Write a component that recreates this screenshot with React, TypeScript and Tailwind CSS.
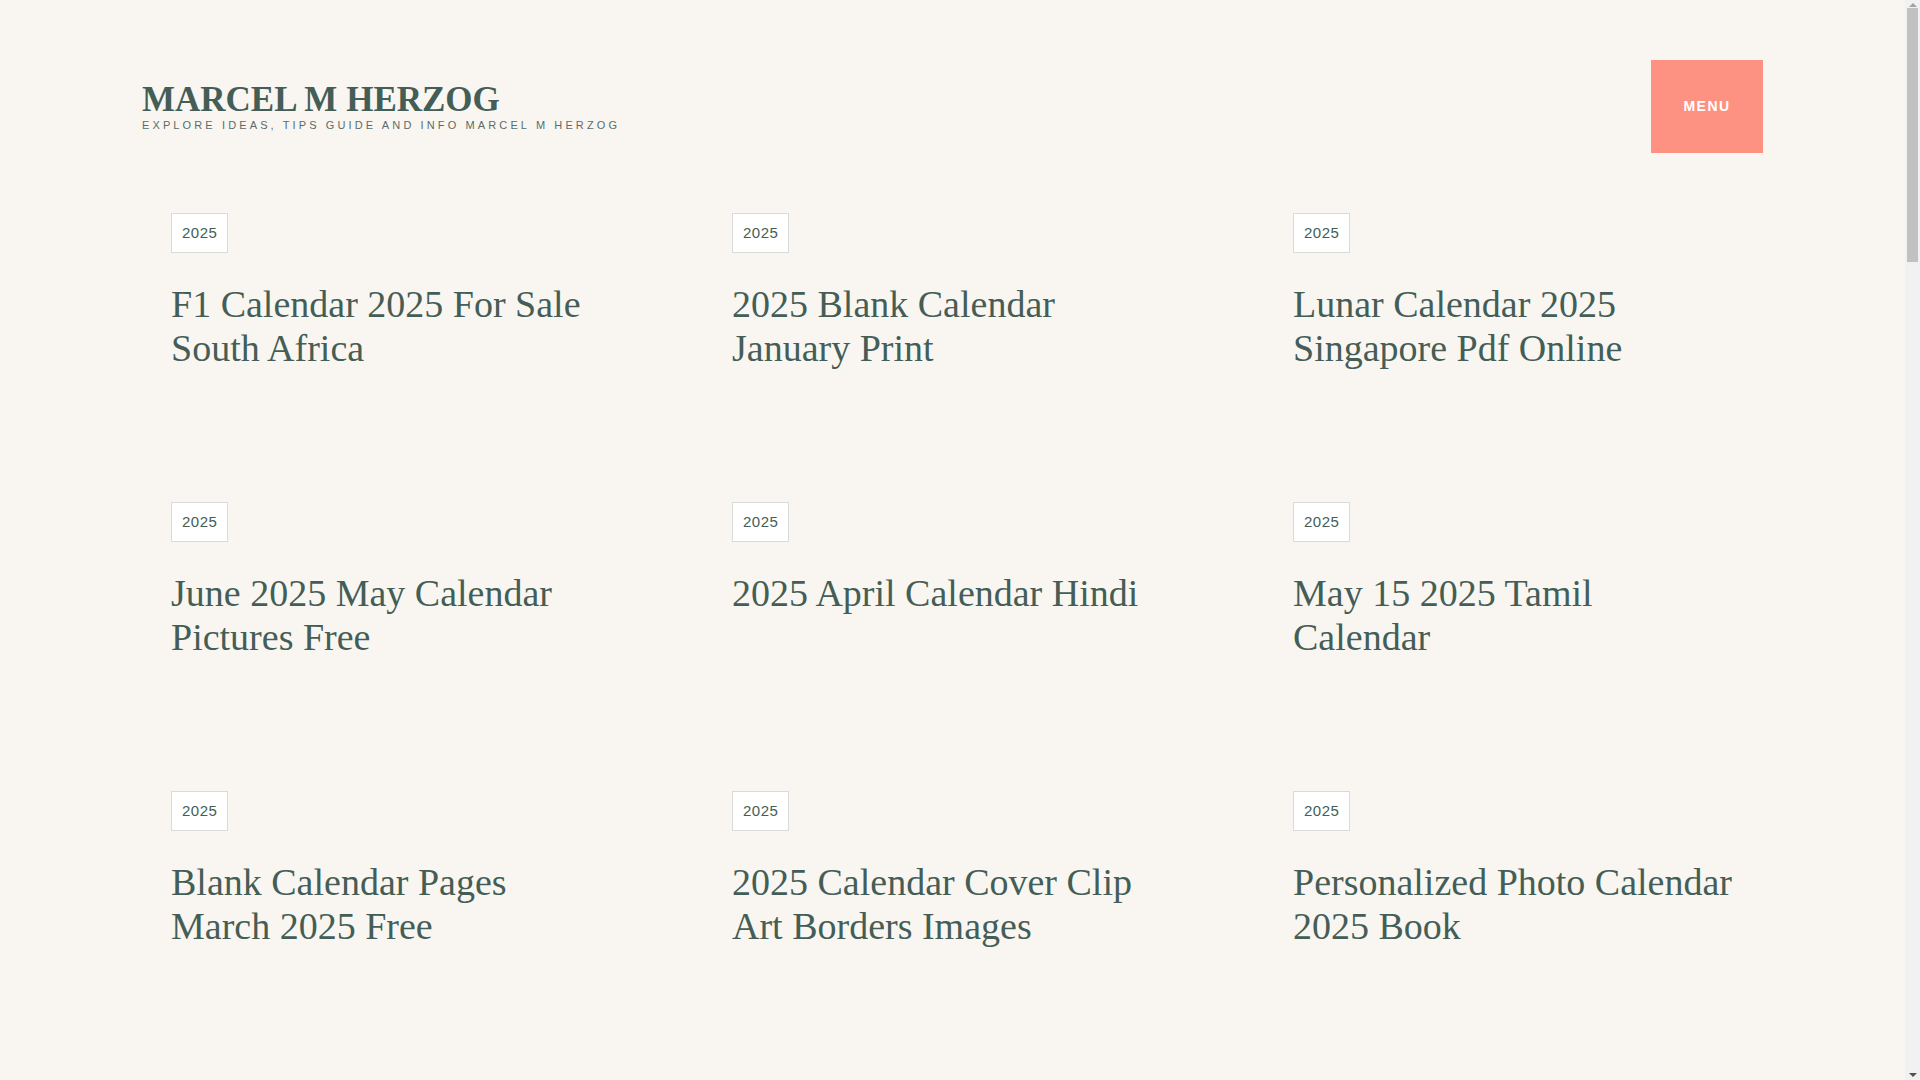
import React from 'react';

const posts: string[] = [
  'F1 Calendar 2025 For Sale South Africa',
  '2025 Blank Calendar January Print',
  'Lunar Calendar 2025 Singapore Pdf Online',
  'June 2025 May Calendar Pictures Free',
  '2025 April Calendar Hindi',
  'May 15 2025 Tamil Calendar',
  'Blank Calendar Pages March 2025 Free',
  '2025 Calendar Cover Clip Art Borders Images',
  'Personalized Photo Calendar 2025 Book',
];

function PostCard({ title }: { title: string }) {
  return (
    <article className="flex flex-col items-start">
      <a
        href="#"
        className="flex h-[40px] items-center border border-[#d9dbd8] bg-white px-[10px] font-['Liberation_Sans',Arial,sans-serif] text-[15px] tracking-[0.5px] text-[#445e57]"
      >
        2025
      </a>
      <h2 className="mt-[29px] font-['Liberation_Serif','Times_New_Roman',serif] text-[38px] font-normal leading-[44px] text-[#445e57]">
        <a href="#">{title}</a>
      </h2>
    </article>
  );
}

// browser-style scrollbar strip on the right edge
function ScrollBar() {
  return (
    <div className="flex h-full w-[15px] shrink-0 flex-col items-center bg-[#f1f1f1]">
      <div className="mt-[3px] h-0 w-0 border-x-[4px] border-b-[4px] border-x-transparent border-b-[#a3a3a3]" />
      <div className="mt-[1px] h-[254px] w-[11px] bg-[#c1c1c1]" />
      <div className="flex-1" />
      <div className="mb-[3px] h-0 w-0 border-x-[4px] border-t-[4px] border-x-transparent border-t-[#505050]" />
    </div>
  );
}

export default function App() {
  return (
    <div className="flex h-screen overflow-hidden bg-[#f9f6f1]">
      <div className="flex-1">
        {/* Header */}
        <header className="flex items-start justify-between px-[142px] pt-[60px]">
          <div className="mt-[22px] flex flex-col">
            <a
              href="#"
              className="font-['Liberation_Serif','Times_New_Roman',serif] text-[35px] font-bold leading-[36px] text-[#445e57]"
            >
              MARCEL M HERZOG
            </a>
            <p className="mt-[1px] font-['Liberation_Sans',Arial,sans-serif] text-[11px] leading-[12px] tracking-[3.12px] text-[#5b6c67]">
              EXPLORE IDEAS, TIPS GUIDE AND INFO MARCEL M HERZOG
            </p>
          </div>
          <button className="flex h-[93px] w-[112px] items-center justify-center bg-[#fe9282] font-['Liberation_Sans',Arial,sans-serif] text-[14px] font-bold tracking-[1.5px] text-white">
            MENU
          </button>
        </header>

        {/* Posts */}
        <main className="mx-auto mt-[60px] grid w-[1563px] grid-cols-[441px_441px_441px] gap-x-[120px] gap-y-[132px]">
          {posts.map((t, i) => (
            <PostCard key={i} title={t} />
          ))}
        </main>
      </div>
      <ScrollBar />
    </div>
  );
}
